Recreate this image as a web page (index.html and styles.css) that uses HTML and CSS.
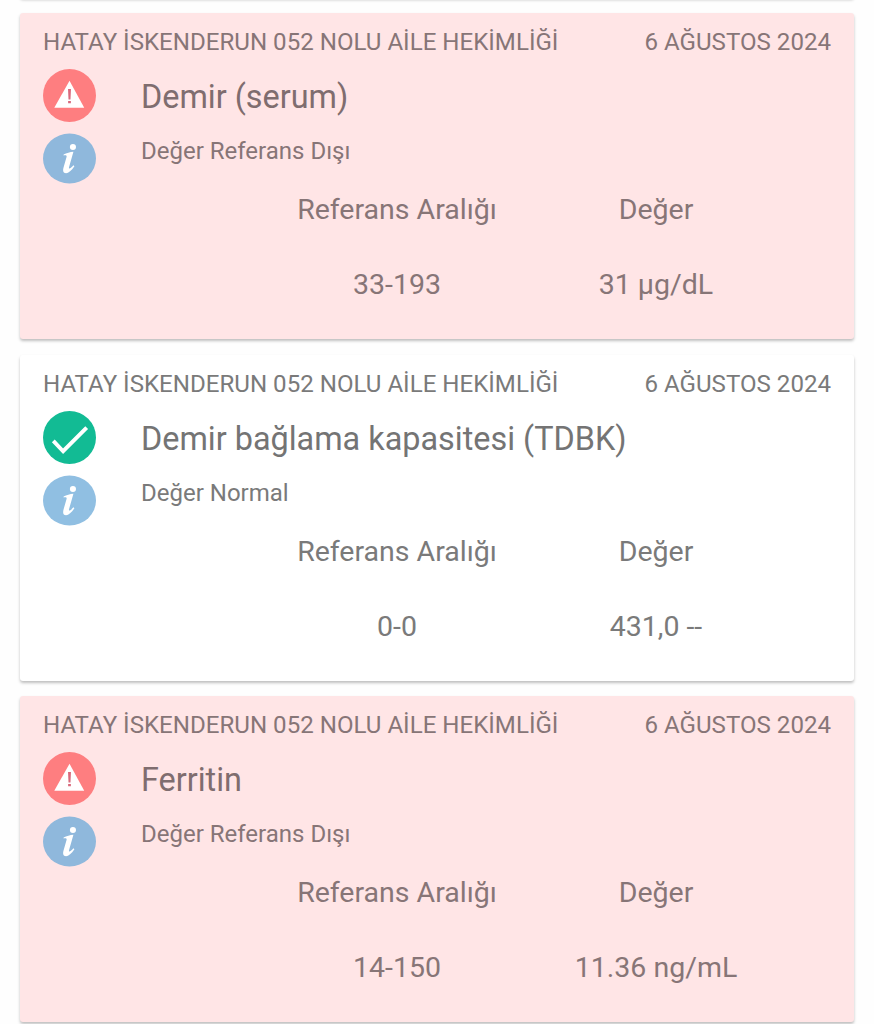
FILE: index.html
```html
<!DOCTYPE html>
<html lang="tr">
<head>
    <meta charset="UTF-8">
    <meta name="viewport" content="width=device-width, initial-scale=1.0">
    <title>Tahlil Sonuçları</title>
    <link rel="stylesheet" href="styles.css">
</head>
<body>
    <!-- Shared icons -->
    <svg class="icon-defs" width="0" height="0">
        <symbol id="icon-warning" viewBox="0 0 54 54">
            <circle cx="27" cy="27" r="27" fill="#fe7e80"/>
            <path d="M27 12L42 39.500H11.500Z" fill="#fff"/>
            <path d="M25.500 20.500h3l-.5 10.500h-2zM25.600 32.500h2.800v2.500h-2.800z" fill="#d9697c"/>
        </symbol>
        <symbol id="icon-check" viewBox="0 0 54 54">
            <circle cx="27" cy="27" r="27" fill="#12bb94"/>
            <path d="M10.500 30.500L20.500 41L44.500 17" fill="none" stroke="#fff" stroke-width="4"/>
        </symbol>
        <symbol id="icon-info" viewBox="0 0 54 51">
            <ellipse cx="27" cy="25.5" rx="27" ry="25.5" fill="currentColor"/>
            <circle cx="30.500" cy="13.800" r="3.1" fill="#fff"/>
            <path d="M21 21.500C24 20 27.500 19 31 18.700L26.500 34.500C26 36.500 27.500 36.500 31 32.500L32 33.500C29 38 26 40.500 23.500 40.500C20.500 40.500 20 38 21 34.500L24 24C24.400 22.500 23.500 22 21 22.500Z" fill="#fff"/>
        </symbol>
    </svg>

    <div class="results">
        <div class="card previous"></div>

        <div class="card abnormal">
            <div class="card-header">
                <span>HATAY İSKENDERUN 052 NOLU AİLE HEKİMLİĞİ</span>
                <span class="date">6 AĞUSTOS 2024</span>
            </div>
            <div class="card-body">
                <div class="icons">
                    <svg class="status-icon"><use href="#icon-warning"/></svg>
                    <svg class="info-icon"><use href="#icon-info"/></svg>
                </div>
                <div class="test">
                    <h2>Demir (serum)</h2>
                    <p>Değer Referans Dışı</p>
                </div>
            </div>
            <div class="values">
                <span class="label">Referans Aralığı</span>
                <span class="label">Değer</span>
                <span>33-193</span>
                <span>31 µg/dL</span>
            </div>
        </div>

        <div class="card">
            <div class="card-header">
                <span>HATAY İSKENDERUN 052 NOLU AİLE HEKİMLİĞİ</span>
                <span class="date">6 AĞUSTOS 2024</span>
            </div>
            <div class="card-body">
                <div class="icons">
                    <svg class="status-icon"><use href="#icon-check"/></svg>
                    <svg class="info-icon"><use href="#icon-info"/></svg>
                </div>
                <div class="test">
                    <h2>Demir bağlama kapasitesi (TDBK)</h2>
                    <p>Değer Normal</p>
                </div>
            </div>
            <div class="values">
                <span class="label">Referans Aralığı</span>
                <span class="label">Değer</span>
                <span>0-0</span>
                <span>431,0 --</span>
            </div>
        </div>

        <div class="card abnormal">
            <div class="card-header">
                <span>HATAY İSKENDERUN 052 NOLU AİLE HEKİMLİĞİ</span>
                <span class="date">6 AĞUSTOS 2024</span>
            </div>
            <div class="card-body">
                <div class="icons">
                    <svg class="status-icon"><use href="#icon-warning"/></svg>
                    <svg class="info-icon"><use href="#icon-info"/></svg>
                </div>
                <div class="test">
                    <h2>Ferritin</h2>
                    <p>Değer Referans Dışı</p>
                </div>
            </div>
            <div class="values">
                <span class="label">Referans Aralığı</span>
                <span class="label">Değer</span>
                <span>14-150</span>
                <span>11.36 ng/mL</span>
            </div>
        </div>
    </div>
</body>
</html>
```
FILE: styles.css
```css
* {
    box-sizing: border-box;
}
body {
    margin: 0;
    height: 1024px;
    overflow: hidden;
    background-color: #fefefe;
    color: #7a7a7a;
    font-family: Roboto, sans-serif;
}
.icon-defs {
    display: block;
}
.results {
    display: flex;
    flex-direction: column;
    gap: 15.5px;
    padding: 0 20px;
}
.card {
    flex: none;
    height: 326px;
    padding: 14px 23px 0;
    background-color: #fff;
    border-radius: 3px;
    box-shadow: 0 2px 3px rgba(0, 0, 0, 0.25);
}
.card.abnormal {
    background-color: #ffe5e6;
    color: #877577;
}
/* end of the card scrolled off the top */
.card.previous {
    height: 10px;
    margin-top: -12.5px;
    padding: 0;
}
.card-header {
    display: flex;
    justify-content: space-between;
    line-height: 30px;
    font-size: 24.1px;
    white-space: nowrap;
}
.card-body {
    display: flex;
    gap: 45px;
    height: 129px;
    padding-top: 12px;
}
.icons {
    display: flex;
    flex-direction: column;
    gap: 11px;
    width: 53px;
}
.status-icon {
    width: 53px;
    height: 53px;
}
.info-icon {
    width: 53px;
    height: 51px;
    color: #90bfe2;
}
.abnormal .info-icon {
    color: #8fb8dc;
}
h2 {
    margin: 8px 0 0;
    font-size: 32.4px;
    font-weight: 400;
    line-height: 40px;
    color: #747474;
}
.abnormal h2 {
    color: #7f6d6f;
}
p {
    margin: 19px 0 0;
    font-size: 24px;
    line-height: 30px;
}
.values {
    display: grid;
    grid-template-columns: 259px 259px;
    grid-template-rows: 40px 40px;
    row-gap: 35px;
    padding: 4px 0 0 224.5px;
    font-size: 28.5px;
    line-height: 40px;
    text-align: center;
}
```
